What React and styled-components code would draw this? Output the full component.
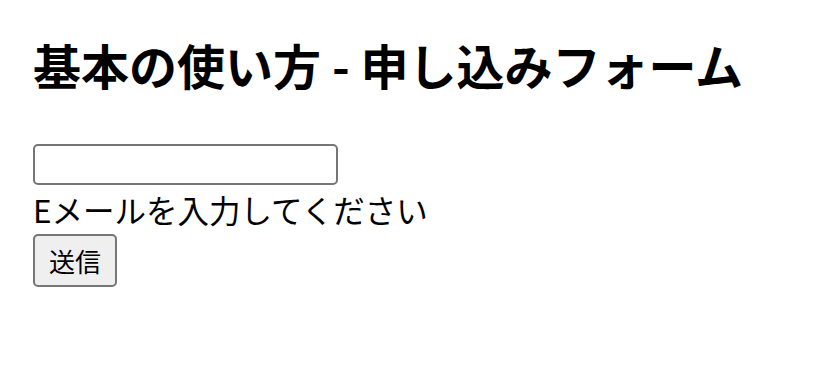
import React from 'react';
import styled, { createGlobalStyle } from 'styled-components';

const GlobalStyle = createGlobalStyle`
    body {
        margin: 0;
        background: #ffffff;
        color: #000000;
        font-family: "Noto Sans CJK JP", "Noto Sans", sans-serif;
    }
`

const Page = styled.div`
    padding: 0 33px;
`

const Title = styled.h2`
    font-size: 48px;
    font-weight: bold;
    line-height: 48px;
    margin: 0;
    padding-top: 40px;
    padding-bottom: 56px;
`

const Form = styled.form`
    display: flex;
    flex-direction: column;
    align-items: flex-start;
`

const EmailInput = styled.input`
    box-sizing: border-box;
    width: 305px;
    height: 41px;
    border: 2px solid #767676;
    border-radius: 5px;
    padding: 2px 4px;
    font-size: 26px;
    background: #ffffff;
`

const Hint = styled.span`
    font-size: 31.5px;
    line-height: 49px;
`

const SubmitButton = styled.button`
    box-sizing: border-box;
    width: 84px;
    height: 53px;
    border: 2px solid #767676;
    border-radius: 5px;
    background: #efefef;
    color: #000000;
    font-family: "Noto Sans CJK JP", sans-serif;
    font-size: 26px;
    padding: 0;
`

const App = () => {
    return (
        <Page>
            <GlobalStyle/>
            <Title>基本の使い方 - 申し込みフォーム</Title>
            <Form onSubmit={(e) => e.preventDefault()}>
                <EmailInput type="email"/>
                <Hint>Eメールを入力してください</Hint>
                <SubmitButton type="submit">送信</SubmitButton>
            </Form>
        </Page>
    )
}

export default App;
